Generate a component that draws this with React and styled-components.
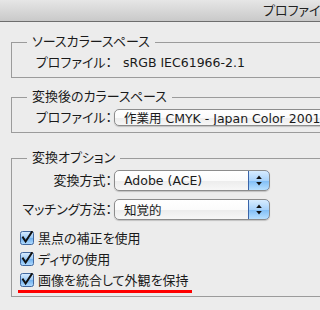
import React from 'react'
import styled, { createGlobalStyle } from 'styled-components'

const Global = createGlobalStyle`
  html, body {
    margin: 0;
    padding: 0;
    background: #ececec;
  }
  body {
    font-family: "DejaVu Sans", "Noto Sans CJK JP", sans-serif;
    font-size: 12.5px;
    font-feature-settings: "palt";
    color: #1a1a1a;
  }
`

const Window = styled.div`
  width: 320px;
  height: 310px;
  overflow: hidden;
  background: #ececec;
`

const TitleBar = styled.div`
  height: 21px;
  border-bottom: 1px solid #6e6e6e;
  background: linear-gradient(#e6e6e6, #c9c9c9);
  padding-left: 263px;
  line-height: 22px;
  white-space: nowrap;
  overflow: hidden;
  font-size: 13px;
  color: #222;
`

const Body = styled.div`
  padding: 13px 0 0 11px;
  width: 360px;
`

const Group = styled.fieldset`
  margin: ${p => p.$top || 0}px 0 0 0;
  padding: ${p => p.$padTop}px 0 ${p => p.$padBottom}px 6px;
  border: 1px solid #9b9b9b;
  border-radius: 0;
  min-width: 0;
`

const Legend = styled.legend`
  margin-left: 9px;
  padding: 0 5px 0 5px;
  line-height: 14px;
  height: 14px;
  font-size: 13px;
`

const Row = styled.div`
  display: grid;
  grid-template-columns: 94px 1fr;
  column-gap: 2px;
  align-items: center;
  margin-top: ${p => p.$mt || 0}px;
`

const Label = styled.div`
  text-align: right;
  white-space: nowrap;
  line-height: 16px;
  font-size: 13px;
`

const Value = styled.div`
  white-space: nowrap;
  line-height: 16px;
  margin-left: 9px;
`

const Popup = styled.div`
  position: relative;
  height: ${p => p.$h}px;
  width: ${p => p.$w}px;
  box-sizing: border-box;
  border: 1px solid #8c8c8c;
  border-radius: 5px;
  background: linear-gradient(#ffffff 0%, #fbfbfb 50%, #ececec 51%, #f7f7f7 100%);
  box-shadow: 0 1px 1px rgba(0, 0, 0, 0.18);
  display: flex;
  align-items: center;
  padding-left: 9px;
  white-space: nowrap;
  overflow: hidden;
`

const Stepper = styled.div`
  position: absolute;
  right: -1px;
  top: -1px;
  bottom: -1px;
  width: 20px;
  border: 1px solid #3a64a8;
  border-radius: 0 5px 5px 0;
  background: linear-gradient(#d7ecff 0%, #a9d3fb 50%, #7fbdf6 51%, #b8e0ff 100%);
  display: flex;
  align-items: center;
  justify-content: center;
`

const Check = styled.label`
  display: flex;
  align-items: center;
  gap: 4px;
  margin-left: 2px;
  margin-top: ${p => p.$mt || 0}px;
  height: 21px;
  white-space: nowrap;
  font-size: 13px;
`

const Marked = styled.div`
  width: fit-content;
  padding-right: 3px;
  border-bottom: 3px solid #ff0000;
`

const Arrows = () => (
  <svg width="6" height="11" viewBox="0 0 6 11">
    <path d="M3 0.5 L5.8 4 L0.2 4 Z" fill="#111" />
    <path d="M3 10.5 L5.8 7 L0.2 7 Z" fill="#111" />
  </svg>
)

const CheckBox = () => (
  <svg width="14" height="14" viewBox="0 0 14 14">
    <defs>
      <linearGradient id="cbg" x1="0" y1="0" x2="0" y2="1">
        <stop offset="0" stopColor="#d9ecff" />
        <stop offset="0.5" stopColor="#9ccaf5" />
        <stop offset="0.51" stopColor="#6fb0ee" />
        <stop offset="1" stopColor="#b4dcff" />
      </linearGradient>
    </defs>
    <rect x="0.5" y="0.5" width="13" height="13" rx="2" fill="url(#cbg)" stroke="#41689f" />
    <path d="M3 6.5 L5.6 10.5 L11.8 1" fill="none" stroke="#111" strokeWidth="2" strokeLinecap="square" />
  </svg>
)

export default function App() {
  return (
    <Window>
      <Global />
      <TitleBar>プロファイル変換</TitleBar>
      <Body>
        <Group $padTop={6} $padBottom={6}>
          <Legend>ソースカラースペース</Legend>
          <Row>
            <Label>プロファイル：</Label>
            <Value>sRGB IEC61966-2.1</Value>
          </Row>
        </Group>

        <Group $top={12} $padTop={5} $padBottom={6}>
          <Legend>変換後のカラースペース</Legend>
          <Row>
            <Label>プロファイル：</Label>
            <Popup $h={17} $w={260}>作業用 CMYK - Japan Color 2001 Coated</Popup>
          </Row>
        </Group>

        <Group $top={18} $padTop={5} $padBottom={3}>
          <Legend>変換オプション</Legend>
          <Row>
            <Label>変換方式：</Label>
            <Popup $h={21} $w={156}>
              Adobe (ACE)
              <Stepper><Arrows /></Stepper>
            </Popup>
          </Row>
          <Row $mt={8}>
            <Label>マッチング方法：</Label>
            <Popup $h={21} $w={156}>
              知覚的
              <Stepper><Arrows /></Stepper>
            </Popup>
          </Row>
          <Check $mt={7}><CheckBox />黒点の補正を使用</Check>
          <Check><CheckBox />ディザの使用</Check>
          <Marked>
            <Check><CheckBox />画像を統合して外観を保持</Check>
          </Marked>
        </Group>
      </Body>
    </Window>
  )
}
